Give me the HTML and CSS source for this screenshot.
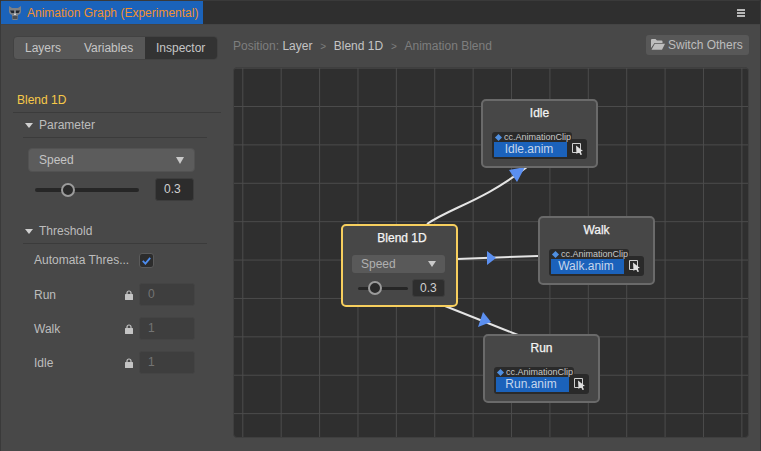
FILE: index.html
```html
<!DOCTYPE html>
<html lang="en">
<head>
<meta charset="utf-8">
<title>Animation Graph</title>
<link rel="stylesheet" href="styles.css">
</head>
<body>
<div class="window">
  <header class="tabbar">
    <div class="tab">
      <svg class="logo" viewBox="0 0 14 14"><path d="M1 0l3 2h6l3-2v6l-1 2-2 1v4l-1 1H5l-1-1V9L2 8 1 6z" fill="#7c8186"/><path d="M2 4.500h4v2.500H3.500zM8 4.500h4L10.500 7H8z" fill="#20252b"/><path d="M4.500 10h5v3h-5z" fill="#4a5056"/><path d="M6 7.500h2v1.500H6z" fill="#d8d8d8"/></svg>
      <span>Animation Graph (Experimental)</span>
    </div>
    <button class="menu" aria-label="Menu"><i></i><i></i><i></i></button>
  </header>
  <div class="body">
    <aside class="side">
      <nav class="tabs">
        <span class="seg seg-l">Layers</span>
        <span class="seg seg-v">Variables</span>
        <span class="seg seg-i">Inspector</span>
      </nav>
      <h2 class="title">Blend 1D</h2>
      <section class="sect">
        <h3 class="sect-head"><b class="tri"></b>Parameter</h3>
        <div class="select"><span>Speed</span><b class="tri tri-sel"></b></div>
        <div class="slider-row">
          <div class="slider"><b class="thumb"></b></div>
          <div class="num">0.3</div>
        </div>
      </section>
      <section class="sect sect-t">
        <h3 class="sect-head"><b class="tri"></b>Threshold</h3>
        <div class="prop prop-first">
          <label>Automata Thres...</label>
          <span class="check"><svg viewBox="0 0 14 14"><path d="M3 7.500l2.800 2.800L11 4.200" fill="none" stroke="#4d8df0" stroke-width="2"/></svg></span>
        </div>
        <div class="prop"><label>Run</label><svg class="lock" viewBox="0 0 8 10"><path d="M2 4.500V3a2 2 0 0 1 4 0v1.500" fill="none" stroke="#c4c4c4" stroke-width="1.200"/><rect y="4" width="8" height="6" rx=".5" fill="#c4c4c4"/></svg><span class="ro">0</span></div>
        <div class="prop"><label>Walk</label><svg class="lock" viewBox="0 0 8 10"><path d="M2 4.500V3a2 2 0 0 1 4 0v1.500" fill="none" stroke="#c4c4c4" stroke-width="1.200"/><rect y="4" width="8" height="6" rx=".5" fill="#c4c4c4"/></svg><span class="ro">1</span></div>
        <div class="prop"><label>Idle</label><svg class="lock" viewBox="0 0 8 10"><path d="M2 4.500V3a2 2 0 0 1 4 0v1.500" fill="none" stroke="#c4c4c4" stroke-width="1.200"/><rect y="4" width="8" height="6" rx=".5" fill="#c4c4c4"/></svg><span class="ro">1</span></div>
      </section>
    </aside>
    <main class="main">
      <div class="crumbs">
        <div class="path">
          <span class="dim">Position:</span> <span class="lit">Layer</span><span class="sep">&gt;</span><span class="lit">Blend 1D</span><span class="sep">&gt;</span><span class="dim">Animation Blend</span>
        </div>
        <button class="switch"><svg viewBox="0 0 14 11"><path d="M0 1a1 1 0 0 1 1-1h3.500l1.500 1.500h4.500a1 1 0 0 1 1 1V4H3.500L0 9z" fill="#bdbdbd"/><path d="M3.800 4.800H14l-3 6H.5z" fill="#bdbdbd"/></svg>Switch Others</button>
      </div>
      <div class="canvas">
        <svg class="wires" viewBox="0 0 516 371">
          <path d="M194 157C217 141 250 134 294 100" fill="none" stroke="#e4e4e4" stroke-width="2"/>
          <path d="M224 192L305 189" fill="none" stroke="#e4e4e4" stroke-width="2"/>
          <path d="M212 239L285 268" fill="none" stroke="#e4e4e4" stroke-width="2"/>
          <path d="M276 103L292 100 284 115z" fill="#5b8ff0"/>
          <path d="M254 184L263 191 254 198z" fill="#5b8ff0"/>
          <path d="M250 245L245 260 258 255z" fill="#5b8ff0"/>
        </svg>

        <article class="node n-blend">
          <h4>Blend 1D</h4>
          <div class="n-select"><span>Speed</span><b class="tri tri-sel"></b></div>
          <div class="n-slider">
            <div class="slider"><b class="thumb"></b></div>
            <div class="num">0.3</div>
          </div>
        </article>

        <article class="node n-idle">
          <h4>Idle</h4>
          <div class="asset"><div class="tag"><b></b>cc.AnimationClip</div><div class="field"><span class="anim">Idle.anim</span><svg class="pick" viewBox="0 0 12 12"><path d="M.5.500h8v9h-8z" fill="none" stroke="#d0d0d0"/><path d="M4 2.500l7 5.500-2.500.3L10 11.500l-1.500.5-1.500-3L4.500 11z" fill="#e0e0e0"/></svg></div></div>
        </article>
        <article class="node n-walk">
          <h4>Walk</h4>
          <div class="asset"><div class="tag"><b></b>cc.AnimationClip</div><div class="field"><span class="anim">Walk.anim</span><svg class="pick" viewBox="0 0 12 12"><path d="M.5.500h8v9h-8z" fill="none" stroke="#d0d0d0"/><path d="M4 2.500l7 5.500-2.500.3L10 11.500l-1.500.5-1.500-3L4.500 11z" fill="#e0e0e0"/></svg></div></div>
        </article>
        <article class="node n-run">
          <h4>Run</h4>
          <div class="asset"><div class="tag"><b></b>cc.AnimationClip</div><div class="field"><span class="anim">Run.anim</span><svg class="pick" viewBox="0 0 12 12"><path d="M.5.500h8v9h-8z" fill="none" stroke="#d0d0d0"/><path d="M4 2.500l7 5.500-2.500.3L10 11.500l-1.500.5-1.500-3L4.500 11z" fill="#e0e0e0"/></svg></div></div>
        </article>
      </div>
    </main>
  </div>
</div>
</body>
</html>
```

FILE: styles.css
```css
* { box-sizing: border-box; }
html, body { margin: 0; height: 100%; }
body {
  background: #333;
  font-family: "Liberation Sans", Arial, sans-serif;
  font-size: 12px;
  color: #bdbdbd;
  overflow: hidden;
}
h2, h3, h4 { margin: 0; font-weight: normal; }
.window {
  width: 761px;
  height: 451px;
  display: flex;
  flex-direction: column;
  background: #484848;
  border: 1px solid #3a3a3a;
  border-width: 1px 1px 0 1px;
  border-radius: 3px 3px 0 0;
}
.tabbar {
  height: 24px;
  flex: none;
  display: flex;
  align-items: stretch;
  justify-content: space-between;
  background: #2f2f2f;
  border-bottom: 1px solid #444;
}
.tab {
  width: 202px;
  display: flex;
  align-items: center;
  gap: 5px;
  padding-left: 7px;
  background: #1b63ba;
  color: #f09030;
  font-size: 12px;
  white-space: nowrap;
}
.logo { width: 14px; height: 14px; flex: none; }
.menu {
  width: 38px;
  padding: 0 15px 0 0;
  background: none;
  border: 0;
  display: flex;
  flex-direction: column;
  align-items: flex-end;
  justify-content: center;
  gap: 1px;
}
.menu i { display: block; width: 8px; height: 2px; flex: none; background: #b8b8b8; }
.body { flex: 1; display: flex; min-height: 0; }
.side { width: 232px; flex: none; padding: 11px 0 0 12px; }
.tabs {
  width: 205px;
  height: 24px;
  display: flex;
  align-items: stretch;
  background: #575757;
  border: 1px solid #424242;
  border-radius: 4px;
  overflow: hidden;
  line-height: 22px;
  color: #c6c6c6;
}
.seg { display: block; }
.seg-l { width: 58px; padding-left: 11px; }
.seg-v { width: 73px; padding-left: 12px; }
.seg-i { flex: 1; background: #333; padding-left: 11px; }
.title {
  width: 208px;
  height: 26px;
  margin-top: 27px;
  padding: 0 0 0 4px;
  font-size: 12px;
  line-height: 27px;
  color: #f7c948;
  border-bottom: 1px solid #3b3b3b;
}
.sect { width: 184px; margin-left: 10px; }
.sect-head {
  height: 25px;
  display: flex;
  align-items: center;
  gap: 6px;
  padding-left: 2px;
  font-size: 12px;
  color: #bdbdbd;
  border-bottom: 1px solid #3b3b3b;
}
.tri {
  display: block;
  width: 0;
  height: 0;
  border: 4px solid transparent;
  border-top: 5px solid #d0d0d0;
  border-bottom: 0;
}
.select {
  width: 167px;
  height: 24px;
  margin: 10px 0 0 5px;
  padding: 0 10px;
  display: flex;
  align-items: center;
  justify-content: space-between;
  background: #5c5c5c;
  border: 1px solid #525252;
  border-radius: 4px;
  color: #c4c4c4;
}
.tri-sel { border-width: 7px 4.500px 0; border-top-color: #c9c9c9; }
.slider-row { display: flex; align-items: center; justify-content: space-between; height: 23px; margin: 6px 0 0 12px; width: 159px; }
.slider { position: relative; width: 104px; height: 4px; background: #262626; border-radius: 2px; }
.thumb {
  position: absolute;
  left: 26px;
  top: -5px;
  width: 14px;
  height: 14px;
  border-radius: 50%;
  background: #2a2a2a;
  border: 2px solid #9b9b9b;
}
.num {
  width: 39px;
  height: 23px;
  line-height: 21px;
  padding-left: 8px;
  background: #2c2c2c;
  border: 1px solid #3d3d3d;
  border-radius: 3px;
  color: #d0d0d0;
}
.sect-t { margin-top: 18px; }
.prop { height: 23px; margin-top: 11px; display: flex; align-items: center; padding-left: 11px; }
.prop-first { height: 14px; margin-top: 9px; margin-bottom: 16px; }
.prop label { width: 91px; flex: none; white-space: nowrap; }
.prop-first label { width: 105px; }
.check { width: 15px; height: 15px; background: #2c2c2c; border: 1px solid #5a5a5a; border-radius: 3px; display: block; flex: none; }
.check svg { display: block; width: 13px; height: 13px; }
.lock { width: 8px; height: 10px; flex: none; margin-right: 6px; }
.ro {
  width: 56px;
  height: 23px;
  flex: none;
  line-height: 21px;
  padding-left: 8px;
  background: #3e3e3e;
  border: 1px solid #444;
  border-radius: 3px;
  color: #747474;
}
.main { flex: 1; display: flex; flex-direction: column; padding-right: 11px; min-width: 0; }
.crumbs { height: 42px; flex: none; display: flex; align-items: center; justify-content: space-between; }
.path { white-space: nowrap; }
.dim { color: #7e7e7e; }
.lit { color: #c4c4c4; }
.sep { margin: 0 7.750px; color: #7e7e7e; font-size: 10px; }
.switch {
  width: 103px;
  height: 20px;
  margin-top: -3px;
  padding: 0 0 0 5px;
  display: flex;
  align-items: center;
  gap: 3px;
  background: #585858;
  border: 0;
  border-radius: 3px;
  color: #bdbdbd;
  font: 12px "Liberation Sans", Arial, sans-serif;
}
.switch svg { width: 14px; height: 11px; }
.canvas {
  position: relative;
  width: 516px;
  height: 371px;
  flex: none;
  overflow: hidden;
  background-color: #2f2f2f;
  background-image:
    linear-gradient(to right, #4b4b4b 1px, transparent 1px),
    linear-gradient(to bottom, #4b4b4b 1px, transparent 1px);
  background-size: 38.400px 38.400px;
  background-position: 8.300px -0.400px;
  border: 1px solid #3f3f3f;
  border-radius: 4px;
}
.wires { position: absolute; left: -1px; top: -1px; width: 516px; height: 371px; }
.node {
  position: absolute;
  width: 117px;
  height: 69px;
  background: #474747;
  border: 2px solid #6a6a6a;
  border-radius: 5px;
  text-align: center;
  color: #eee;
}
.node h4 { font-size: 12px; line-height: 14px; margin-top: 5px; color: #f4f4f4; -webkit-text-stroke: 0.25px #f4f4f4; }
.n-idle { left: 247px; top: 31px; }
.n-walk { left: 304px; top: 148px; }
.n-run { left: 249px; top: 266px; }
.n-blend { left: 107px; top: 156px; height: 83px; border-color: #f7cf5e; }
.n-blend h4 { padding-left: 5px; }
.n-select {
  width: 93px;
  height: 18px;
  margin: 10px 0 0 9px;
  padding: 0 9px;
  display: flex;
  align-items: center;
  justify-content: space-between;
  background: #595959;
  border-radius: 3px;
  color: #b0b0b0;
}
.n-select .tri-sel { border-width: 6px 4px 0; }
.n-slider { display: flex; align-items: center; justify-content: space-between; margin: 6px 0 0 15px; width: 87px; height: 18px; }
.n-slider .slider { width: 50px; height: 3px; }
.n-slider .thumb { left: 10px; top: -5.500px; width: 14px; height: 14px; }
.n-slider .num { width: 33px; height: 18px; line-height: 16px; padding-left: 7px; background: #2e2e2e; text-align: left; }
.asset { position: relative; margin: 12px 0 0 9px; width: 95px; height: 27px; text-align: left; }
.tag {
  position: absolute;
  z-index: 1;
  left: 0;
  top: 0;
  width: 80px;
  height: 10px;
  padding-left: 4px;
  background: #2a2a2a;
  border-radius: 3px 3px 0 0;
  font-size: 9px;
  line-height: 10px;
  color: #c8c8c8;
  white-space: nowrap;
  display: flex;
  align-items: center;
  gap: 3px;
}
.tag b { width: 5px; height: 5px; flex: none; transform: rotate(45deg); background: #4f8fe0; }
.field {
  position: absolute;
  left: 0;
  top: 7px;
  width: 95px;
  height: 20px;
  background: #2a2a2a;
  border-radius: 3px;
  display: flex;
  align-items: center;
}
.anim {
  width: 73px;
  height: 15px;
  margin-left: 2px;
  background: #1b62bb;
  color: #c6d6ec;
  font-size: 12px;
  line-height: 15px;
  text-align: center;
  padding-right: 3px;
}
.pick { width: 12px; height: 12px; margin-left: 5px; flex: none; }
```
